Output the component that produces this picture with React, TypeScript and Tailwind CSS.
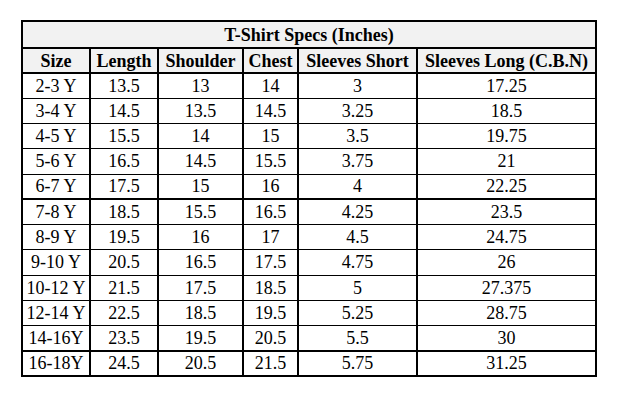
import React from 'react';

const rows: string[][] = [
  ['2-3 Y', '13.5', '13', '14', '3', '17.25'],
  ['3-4 Y', '14.5', '13.5', '14.5', '3.25', '18.5'],
  ['4-5 Y', '15.5', '14', '15', '3.5', '19.75'],
  ['5-6 Y', '16.5', '14.5', '15.5', '3.75', '21'],
  ['6-7 Y', '17.5', '15', '16', '4', '22.25'],
  ['7-8 Y', '18.5', '15.5', '16.5', '4.25', '23.5'],
  ['8-9 Y', '19.5', '16', '17', '4.5', '24.75'],
  ['9-10 Y', '20.5', '16.5', '17.5', '4.75', '26'],
  ['10-12 Y', '21.5', '17.5', '18.5', '5', '27.375'],
  ['12-14 Y', '22.5', '18.5', '19.5', '5.25', '28.75'],
  ['14-16Y', '23.5', '19.5', '20.5', '5.5', '30'],
  ['16-18Y', '24.5', '20.5', '21.5', '5.75', '31.25'],
];

const headers = ['Size', 'Length', 'Shoulder', 'Chest', 'Sleeves Short', 'Sleeves Long (C.B.N)'];

// rows followed by a heavier rule
const thick = [4, 10];

const App = () => {
  return (
    <div className="w-[623px] h-[401px] bg-white pt-[20px] pl-[21px] font-['Liberation_Serif',serif] text-black text-[18px]">
      <table className="table-fixed border-collapse border-2 border-black w-[576px]">
        <colgroup>
          <col className="w-[68px]" />
          <col className="w-[68px]" />
          <col className="w-[85px]" />
          <col className="w-[55px]" />
          <col className="w-[119px]" />
          <col />
        </colgroup>
        <thead>
          <tr className="h-[27px] bg-[#f2f2f2]">
            <th colSpan={6} className="border-b-2 border-black text-center font-bold leading-none">
              T-Shirt Specs (Inches)
            </th>
          </tr>
          <tr className="h-[25px] bg-[#f2f2f2]">
            {headers.map((h) => (
              <th key={h} className="border-2 border-black text-center font-bold leading-none whitespace-nowrap px-0">
                {h}
              </th>
            ))}
          </tr>
        </thead>
        <tbody>
          {rows.map((r, i) => (
            <tr key={r[0]} className="h-[25.25px]">
              {r.map((c, j) => (
                <td
                  key={j}
                  className={
                    'border-x-2 border-black text-center leading-none whitespace-nowrap px-0 ' +
                    (thick.includes(i) ? 'border-b-2' : 'border-b')
                  }
                >
                  {c}
                </td>
              ))}
            </tr>
          ))}
        </tbody>
      </table>
    </div>
  );
};

export default App;
